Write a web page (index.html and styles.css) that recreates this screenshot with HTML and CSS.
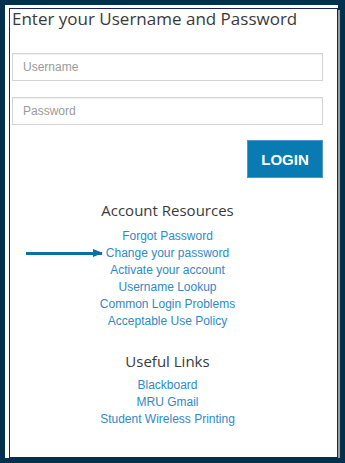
FILE: index.html
```html
<!DOCTYPE html>
<html lang="en">
<head>
    <meta charset="UTF-8">
    <meta name="viewport" content="width=device-width, initial-scale=1.0">
    <title>Login</title>
    <link rel="stylesheet" href="styles.css">
</head>
<body>
    <div class="frame">
        <div class="panel">
            <h1>Enter your Username and Password</h1>

            <form class="login-form" onsubmit="return false">
                <input class="field" type="text" placeholder="Username">
                <input class="field" type="password" placeholder="Password">
                <div class="actions">
                    <button class="button" type="submit">LOGIN</button>
                </div>
            </form>

            <div class="section">
                <h2>Account Resources</h2>
                <ul class="links">
                    <li><a href="#">Forgot Password</a></li>
                    <li><a href="#" class="pointed">Change your password<span class="arrow"></span></a></li>
                    <li><a href="#">Activate your account</a></li>
                    <li><a href="#">Username Lookup</a></li>
                    <li><a href="#">Common Login Problems</a></li>
                    <li><a href="#">Acceptable Use Policy</a></li>
                </ul>
            </div>

            <div class="section">
                <h2>Useful Links</h2>
                <ul class="links">
                    <li><a href="#">Blackboard</a></li>
                    <li><a href="#">MRU Gmail</a></li>
                    <li><a href="#">Student Wireless Printing</a></li>
                </ul>
            </div>
        </div>
    </div>
</body>
</html>
```

FILE: styles.css
```css
body {
    margin: 0;
    background: #03304d;
    font-family: "Liberation Sans", Arial, sans-serif;
}
.frame {
    display: inline-block;
    margin: 5px 0 0 5px;
    padding: 3px 0 0 4px;
    background: white;
}
.panel {
    box-sizing: border-box;
    width: 329px;
    height: 450px;
    padding: 0 14px 0 2px;
    background: white;
    border: 1px solid #13226a;
    box-shadow: 2px 2px 0 #9c9c9c;
}
h1 {
    margin: 0;
    font-family: "Open Sans", sans-serif;
    font-weight: normal;
    font-size: 17px;
    line-height: 20px;
    color: #3a3a3a;
}
.login-form {
    margin-top: 24px;
    display: flex;
    flex-direction: column;
    gap: 16px;
}
.field {
    box-sizing: border-box;
    height: 28px;
    padding: 0 10px;
    border: 1px solid #d4d4d4;
    box-shadow: inset 0 1px 1px rgba(0, 0, 0, 0.06);
    font-family: "Liberation Sans", Arial, sans-serif;
    font-size: 12px;
    color: #555;
}
.field::placeholder {
    color: #9a9a9a;
}
.actions {
    display: flex;
    justify-content: flex-end;
    margin-top: -1px;
}
.button {
    width: 76px;
    height: 38px;
    background: #0a7ab3;
    border: 1px solid #4f97c4;
    color: white;
    font-family: "Liberation Sans", Arial, sans-serif;
    font-weight: bold;
    font-size: 15px;
    padding: 0;
    cursor: pointer;
}
.section {
    margin-top: 22px;
    text-align: center;
}
.section + .section {
    margin-top: 21px;
}
h2 {
    margin: 0;
    font-family: "Open Sans", sans-serif;
    font-weight: normal;
    font-size: 15px;
    line-height: 20px;
    color: #3a3a3a;
}
.links {
    list-style: none;
    margin: 8px 0 0;
    padding: 0;
    font-size: 12px;
    line-height: 17px;
}
.section + .section .links {
    margin-top: 6px;
}
.links a {
    color: #3189c6;
    text-decoration: none;
}
.pointed {
    position: relative;
}
.arrow {
    position: absolute;
    right: calc(100% + 4px);
    top: 6px;
    width: 76px;
    height: 3px;
    background: #0b6f9f;
}
.arrow::after {
    content: "";
    position: absolute;
    right: -1px;
    top: -3px;
    border-left: 10px solid #0b6f9f;
    border-top: 4.5px solid transparent;
    border-bottom: 4.5px solid transparent;
}
```
